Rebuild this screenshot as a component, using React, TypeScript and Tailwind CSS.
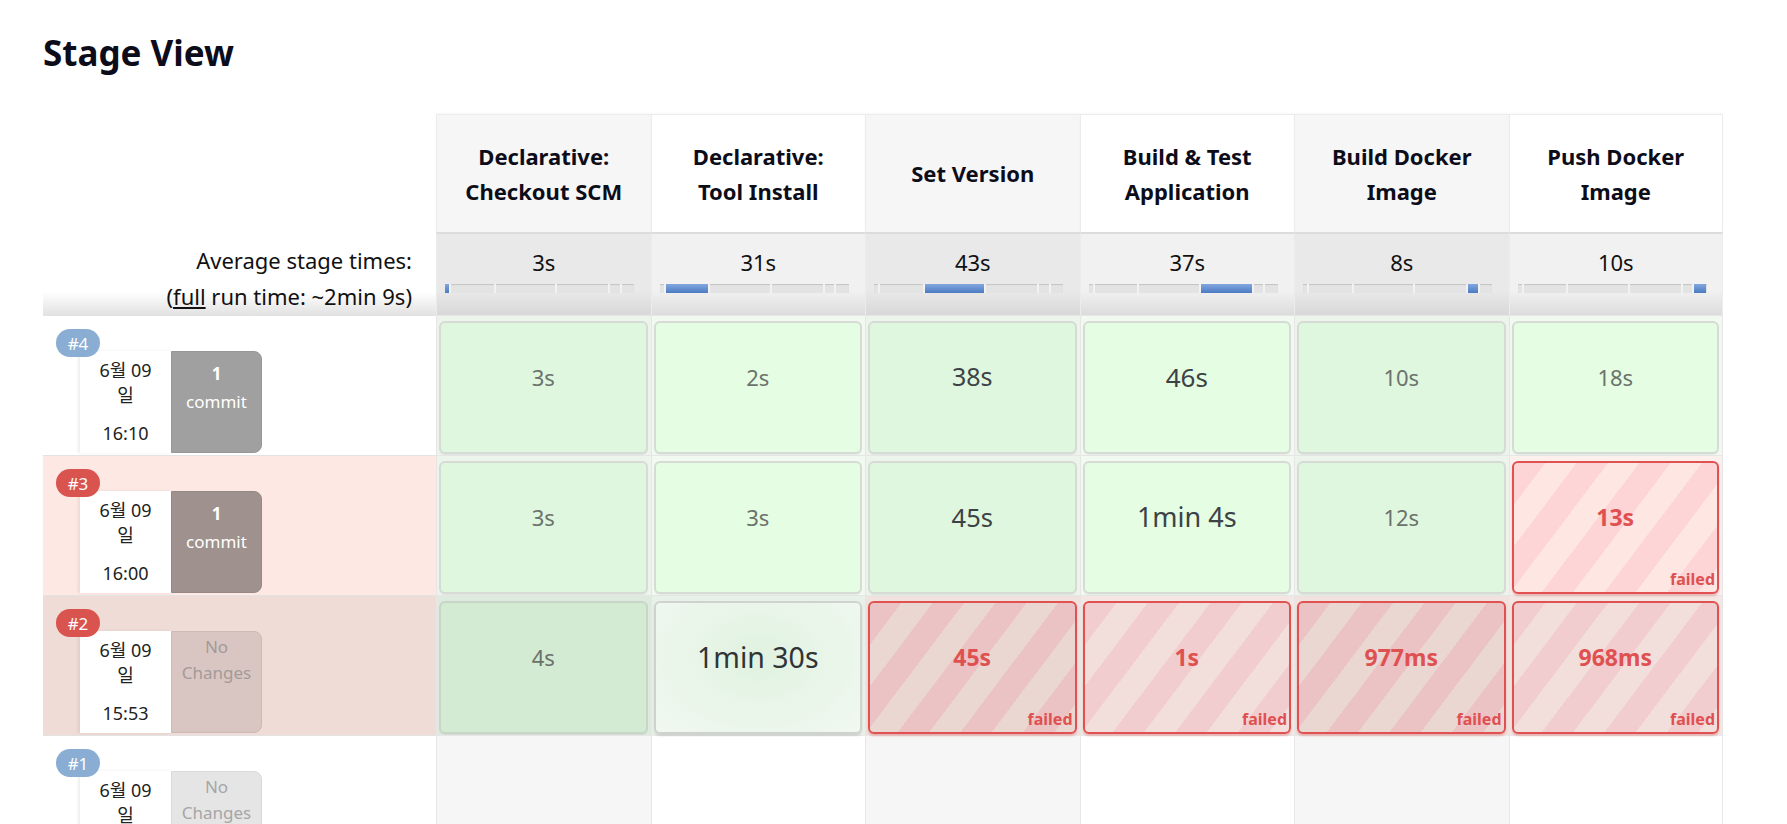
import React from "react";

const stages = [
  { name: ["Declarative:", "Checkout SCM"], avg: "3s" },
  { name: ["Declarative:", "Tool Install"], avg: "31s" },
  { name: ["Set Version"], avg: "43s" },
  { name: ["Build & Test", "Application"], avg: "37s" },
  { name: ["Build Docker", "Image"], avg: "8s" },
  { name: ["Push Docker", "Image"], avg: "10s" },
];
const avgSecs = [3, 31, 43, 37, 8, 10];
const total = avgSecs.reduce((a, b) => a + b, 0);

type Cell = {
  t: string;
  wrap: string;
  box: string;
  txt: string;
  fail?: boolean;
} | null;

const OK_ODD = "border-2 border-[#d6dcd5] bg-[#dff7de] shadow-[0_1px_1px_rgba(0,0,0,0.06)]";
const OK_EVEN = "border-2 border-[#d6dcd5] bg-[#e4fde3] shadow-[0_1px_1px_rgba(0,0,0,0.06)]";
const LIGHT = "text-[22px] text-[#6c726c]";
const FAIL_TXT = "text-[23px] font-bold text-[#df5050]";
const FAIL_BORDER = "border-2 border-[#e05252] shadow-[0_2px_2px_rgba(214,80,80,0.35)]";

const rows: {
  num: string;
  badge: string;
  rowBg: string;
  date: string;
  time: string;
  commit: "one" | "none";
  commitCls: string;
  cells: Cell[];
}[] = [
  {
    num: "#4",
    badge: "bg-[#8aadd3]",
    rowBg: "bg-white",
    date: "6월 09",
    time: "16:10",
    commit: "one",
    commitCls: "bg-[#a0a0a0] border border-[#979797] text-white",
    cells: [
      { t: "3s", wrap: "bg-[#edf4ec]", box: OK_ODD, txt: LIGHT },
      { t: "2s", wrap: "bg-[#f2f9f1]", box: OK_EVEN, txt: LIGHT },
      { t: "38s", wrap: "bg-[#edf4ec]", box: OK_ODD, txt: "text-[25px] text-[#3c4245]" },
      { t: "46s", wrap: "bg-[#f2f9f1]", box: OK_EVEN, txt: "text-[26px] text-[#3c4245]" },
      { t: "10s", wrap: "bg-[#edf4ec]", box: OK_ODD, txt: LIGHT },
      { t: "18s", wrap: "bg-[#f2f9f1]", box: OK_EVEN, txt: LIGHT },
    ],
  },
  {
    num: "#3",
    badge: "bg-[#d9534f]",
    rowBg: "bg-[#fee8e4]",
    date: "6월 09",
    time: "16:00",
    commit: "one",
    commitCls: "bg-[#9f918e] border border-[#968885] text-white",
    cells: [
      { t: "3s", wrap: "bg-[#edf4ec]", box: OK_ODD, txt: LIGHT },
      { t: "3s", wrap: "bg-[#f2f9f1]", box: OK_EVEN, txt: LIGHT },
      { t: "45s", wrap: "bg-[#edf4ec]", box: OK_ODD, txt: "text-[25.5px] text-[#3c4245]" },
      { t: "1min 4s", wrap: "bg-[#f2f9f1]", box: OK_EVEN, txt: "text-[27px] text-[#3c4245]" },
      { t: "12s", wrap: "bg-[#edf4ec]", box: OK_ODD, txt: LIGHT },
      {
        t: "13s",
        wrap: "bg-[#fbf0ee]",
        box: `${FAIL_BORDER} bg-[repeating-linear-gradient(127deg,#fdd5d6_0px,#fdd5d6_25px,#fee6e2_25px,#fee6e2_50px)]`,
        txt: FAIL_TXT,
        fail: true,
      },
    ],
  },
  {
    num: "#2",
    badge: "bg-[#d9534f]",
    rowBg: "bg-[#efdcd7]",
    date: "6월 09",
    time: "15:53",
    commit: "none",
    commitCls: "bg-[#d9c6c2] border border-[#cdbab6] text-[#a39a98]",
    cells: [
      {
        t: "4s",
        wrap: "bg-[#dfeadf]",
        box: "border-2 border-[#c9d5c9] bg-[#d2ebd2] shadow-[0_1px_1px_rgba(0,0,0,0.06)]",
        txt: "text-[22px] text-[#6a716a]",
      },
      {
        t: "1min 30s",
        wrap: "bg-[#e8f1e7]",
        box: "border-2 border-[#cfd2cf] bg-[radial-gradient(ellipse_at_50%_42%,#e0f2e0_0%,#e8f5e8_45%,#f1f8f1_100%)] shadow-[0_2px_2px_rgba(0,0,0,0.12)]",
        txt: "text-[28.5px] text-[#2f3437]",
      },
      {
        t: "45s",
        wrap: "bg-[#efe2df]",
        box: `${FAIL_BORDER} bg-[repeating-linear-gradient(127deg,#ecc3c5_0px,#ecc3c5_25px,#ead7d2_25px,#ead7d2_50px)]`,
        txt: FAIL_TXT,
        fail: true,
      },
      {
        t: "1s",
        wrap: "bg-[#f3e6e3]",
        box: `${FAIL_BORDER} bg-[repeating-linear-gradient(127deg,#f2cdcf_0px,#f2cdcf_25px,#f2dfdb_25px,#f2dfdb_50px)]`,
        txt: FAIL_TXT,
        fail: true,
      },
      {
        t: "977ms",
        wrap: "bg-[#efe2df]",
        box: `${FAIL_BORDER} bg-[repeating-linear-gradient(127deg,#ecc3c5_0px,#ecc3c5_25px,#ead7d2_25px,#ead7d2_50px)]`,
        txt: FAIL_TXT,
        fail: true,
      },
      {
        t: "968ms",
        wrap: "bg-[#f3e6e3]",
        box: `${FAIL_BORDER} bg-[repeating-linear-gradient(127deg,#f2cdcf_0px,#f2cdcf_25px,#f2dfdb_25px,#f2dfdb_50px)]`,
        txt: FAIL_TXT,
        fail: true,
      },
    ],
  },
  {
    num: "#1",
    badge: "bg-[#8aadd3]",
    rowBg: "bg-white",
    date: "6월 09",
    time: "15:40",
    commit: "none",
    commitCls: "bg-[#e5e5e5] border border-[#d9d9d9] text-[#a6a6a6]",
    cells: [null, null, null, null, null, null],
  },
];

function Bar({ active }: { active: number }) {
  return (
    <div className="ml-[8px] mt-[7px] flex h-[9px] w-[189px] overflow-hidden bg-[#e3e3e3] shadow-[inset_0_1px_1px_rgba(0,0,0,0.14)]">
      {avgSecs.map((s, j) => (
        <div
          key={j}
          style={{ width: `${(s / total) * 100}%` }}
          className={`h-full ${j > 0 ? "border-l-2 border-[#f2f2f2]" : ""} ${
            j === active ? "bg-[linear-gradient(to_bottom,#82a7de,#4b7bc3)]" : ""
          }`}
        />
      ))}
    </div>
  );
}

export default function App() {
  return (
    <div className="h-screen overflow-hidden bg-white pl-[43px] pt-[29px] font-['Noto_Sans','Noto_Sans_CJK_KR',sans-serif] text-[#111]">
      <h2 className="text-[35px] font-bold leading-[48px] text-[#0c0c1a]">Stage View</h2>
      <div className="mt-[37px] w-[1680px]">
        {/* Stage names */}
        <div className="grid h-[118px] grid-cols-[393px_repeat(6,214.5px)]">
          <div />
          {stages.map((s, i) => (
            <div
              key={i}
              className={`flex items-center justify-center border-l border-t border-[#ececec] text-center text-[22px] font-bold leading-[35px] text-[#0d0d1a] shadow-[0_-1px_2px_rgba(0,0,0,0.03)] ${
                i % 2 === 0 ? "bg-[#f6f6f6]" : "bg-white"
              } ${i === 5 ? "border-r" : ""}`}
            >
              <div>
                {s.name.map((l) => (
                  <div key={l}>{l}</div>
                ))}
              </div>
            </div>
          ))}
        </div>

        {/* Average times */}
        <div className="grid h-[83px] grid-cols-[393px_repeat(6,214.5px)]">
          <div className="bg-[linear-gradient(to_bottom,#ffffff_0%,#ffffff_72%,#e2e2e2_100%)] pr-[24px] pt-[10px] text-right text-[22px] leading-[36px] text-[#111]">
            <div>Average stage times:</div>
            <div>
              (<span className="underline">full</span> run time: ~2min 9s)
            </div>
          </div>
          {stages.map((s, i) => (
            <div
              key={i}
              className={`border-l border-t-2 border-l-[#ececec] border-t-[#dcdcdc] pt-[13px] ${
                i % 2 === 0
                  ? "bg-[linear-gradient(to_bottom,#e9e9e9_0%,#e9e9e9_70%,#d8d8d8_100%)]"
                  : "bg-[linear-gradient(to_bottom,#f1f1f1_0%,#f1f1f1_70%,#dcdcdc_100%)]"
              } ${i === 5 ? "border-r border-r-[#ececec]" : ""}`}
            >
              <div className="text-center text-[22px] leading-[30px] text-[#111]">{s.avg}</div>
              <Bar active={i} />
            </div>
          ))}
        </div>

        {/* Build rows */}
        {rows.map((r) => (
          <div key={r.num} className="grid h-[140px] grid-cols-[393px_repeat(6,214.5px)]">
            <div className={`border-t border-[#e3e3e3] pl-[13px] pt-[13px] ${r.rowBg}`}>
              <div
                className={`relative z-10 flex h-[28px] w-[44px] items-center justify-center rounded-[14px] text-[17px] leading-none text-white ${r.badge}`}
              >
                {r.num}
              </div>
              <div className="-mt-[6px] ml-[24px] flex h-[102px]">
                <div className="flex w-[91px] flex-col items-center bg-white pt-[7px] text-[18px] leading-[25px] text-[#222] shadow-[-2px_0_3px_rgba(0,0,0,0.07)]">
                  <div>{r.date}</div>
                  <div>일</div>
                  <div className="mt-[13px]">{r.time}</div>
                </div>
                <div
                  className={`flex w-[91px] flex-col items-center rounded-r-[8px] text-[17px] ${
                    r.commit === "one" ? "pt-[8px] leading-[28px]" : "pt-[2px] leading-[26px]"
                  } ${r.commitCls}`}
                >
                  {r.commit === "one" ? (
                    <>
                      <div className="font-bold">1</div>
                      <div>commit</div>
                    </>
                  ) : (
                    <>
                      <div>No</div>
                      <div>Changes</div>
                    </>
                  )}
                </div>
              </div>
            </div>
            {r.cells.map((c, i) =>
              c ? (
                <div
                  key={i}
                  className={`border-l border-t border-[#e6e6e6] pl-[2px] pr-[3px] pt-[5px] ${c.wrap} ${
                    i === 5 ? "border-r" : ""
                  }`}
                >
                  <div className={`relative h-[133px] rounded-[6px] ${c.box}`}>
                    <div className={`flex h-[108px] items-center justify-center ${c.txt}`}>{c.t}</div>
                    {c.fail && (
                      <div className="absolute bottom-[3px] right-[2px] text-[16px] font-bold leading-[20px] text-[#df5050]">
                        failed
                      </div>
                    )}
                  </div>
                </div>
              ) : (
                <div
                  key={i}
                  className={`border-l border-t border-[#e8e8e8] ${
                    i % 2 === 0 ? "bg-[#f6f6f6]" : "bg-white"
                  } ${i === 5 ? "border-r" : ""}`}
                />
              )
            )}
          </div>
        ))}
      </div>
    </div>
  );
}
